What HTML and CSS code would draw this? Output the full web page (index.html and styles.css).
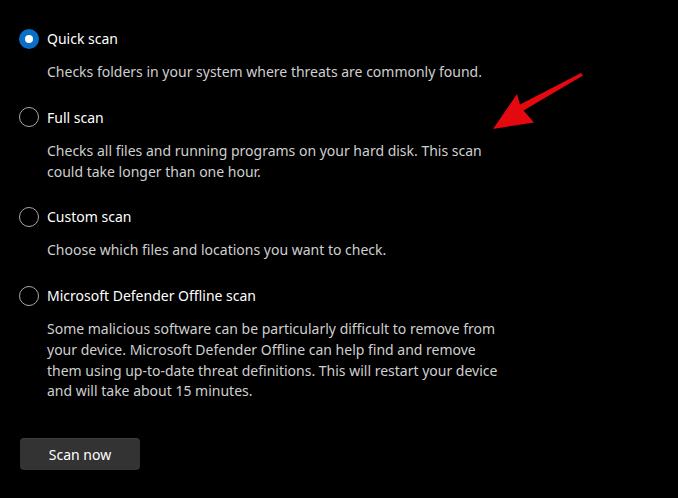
FILE: index.html
```html
<!DOCTYPE html>
<html lang="en">
<head>
<meta charset="utf-8">
<title>Scan options</title>
<link rel="stylesheet" href="styles.css">
</head>
<body>
<main class="page">
  <div class="options">
    <div class="option">
      <label class="row"><span class="radio checked"></span><span class="label">Quick scan</span></label>
      <p class="desc">Checks folders in your system where threats are commonly found.</p>
    </div>
    <div class="option">
      <label class="row"><span class="radio"></span><span class="label">Full scan</span></label>
      <p class="desc">Checks all files and running programs on your hard disk. This scan<br>could take longer than one hour.</p>
    </div>
    <div class="option">
      <label class="row"><span class="radio"></span><span class="label">Custom scan</span></label>
      <p class="desc">Choose which files and locations you want to check.</p>
    </div>
    <div class="option">
      <label class="row"><span class="radio"></span><span class="label">Microsoft Defender Offline scan</span></label>
      <p class="desc">Some malicious software can be particularly difficult to remove from<br>your device. Microsoft Defender Offline can help find and remove<br>them using up-to-date threat definitions. This will restart your device<br>and will take about 15 minutes.</p>
    </div>
  </div>
  <button class="scan-btn" type="button">Scan now</button>
  <svg class="arrow" width="678" height="498" viewBox="0 0 678 498" aria-hidden="true">
    <polygon points="493,129 517,94 520,104.5 581,73 583,75.5 523.5,110.5 534,122.5" fill="#e3090f"/>
  </svg>
</main>
</body>
</html>
```

FILE: styles.css
```css
html, body {
  margin: 0;
  padding: 0;
  background: #000000;
}

body {
  font-family: "Noto Sans", "Open Sans", "DejaVu Sans", sans-serif;
  font-size: 14px;
  color: #ffffff;
  width: 678px;
  height: 498px;
  overflow: hidden;
}

.page {
  position: relative;
  padding: 28.5px 0 0 19px;
  height: 100%;
  box-sizing: border-box;
}

.options {
  display: flex;
  flex-direction: column;
  gap: 24.6px;
}

.option {
  display: flex;
  flex-direction: column;
}

.row {
  display: flex;
  align-items: center;
  gap: 8px;
  height: 20px;
}

.radio {
  width: 20px;
  height: 20px;
  box-sizing: border-box;
  border-radius: 50%;
  border: 1px solid #a8a8a8;
  flex: none;
  display: flex;
  align-items: center;
  justify-content: center;
}

.radio.checked {
  border: none;
  background: #0a6fc9;
}

.radio.checked::after {
  content: "";
  width: 8px;
  height: 8px;
  border-radius: 50%;
  background: #ffffff;
}

.label {
  color: #ffffff;
  font-size: 14px;
  line-height: 20px;
  position: relative;
  top: 0.5px;
}

.desc {
  margin: 13.5px 0 0 28px;
  color: #cfcfcf;
  font-size: 14px;
  line-height: 20.7px;
  white-space: nowrap;
}

.scan-btn {
  margin: 36px 0 0 1px;
  width: 120px;
  height: 32px;
  border: none;
  border-top: 1px solid #3d3d3d;
  border-radius: 4px;
  background: #333333;
  color: #ffffff;
  font-family: inherit;
  font-size: 14px;
  padding: 0;
}

.arrow {
  position: absolute;
  left: 0;
  top: 0;
  pointer-events: none;
}
```
